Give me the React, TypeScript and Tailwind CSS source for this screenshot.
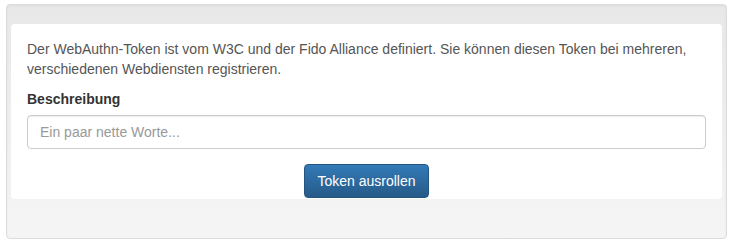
import React from 'react';

const App = () => {
  return (
    <div className="w-[733px] h-[249px] bg-white pt-[4px] pl-[6px] font-['Liberation_Sans',Arial,sans-serif] text-[14px] leading-[20px] text-[#333]">
      <div className="w-[721px] h-[235px] rounded border border-[#dcdcdc] bg-gradient-to-b from-[#e8e8e8] to-[#f5f5f5] pt-[19px] px-[4px] shadow-[inset_0_1px_3px_rgba(0,0,0,0.05)]">
        <div className="h-[175px] rounded bg-white pt-[15px] px-[16px]">
          <p className="text-[#555]">
            Der WebAuthn-Token ist vom W3C und der Fido Alliance definiert. Sie können diesen Token bei mehreren, verschiedenen Webdiensten registrieren.
          </p>
          <label className="block mt-[10px] mb-[6px] font-bold">Beschreibung</label>
          <input
            type="text"
            placeholder="Ein paar nette Worte..."
            className="block w-full h-[34px] rounded border border-[#ccc] px-[12px] text-[#555] placeholder:text-[#999] shadow-[inset_0_1px_1px_rgba(0,0,0,0.075)] outline-none"
          />
          <div className="flex justify-center mt-[15px]">
            <button className="h-[34px] px-[12px] rounded border border-[#245580] bg-gradient-to-b from-[#337ab7] to-[#265a88] text-white">
              Token ausrollen
            </button>
          </div>
        </div>
      </div>
    </div>
  );
};

export default App;
